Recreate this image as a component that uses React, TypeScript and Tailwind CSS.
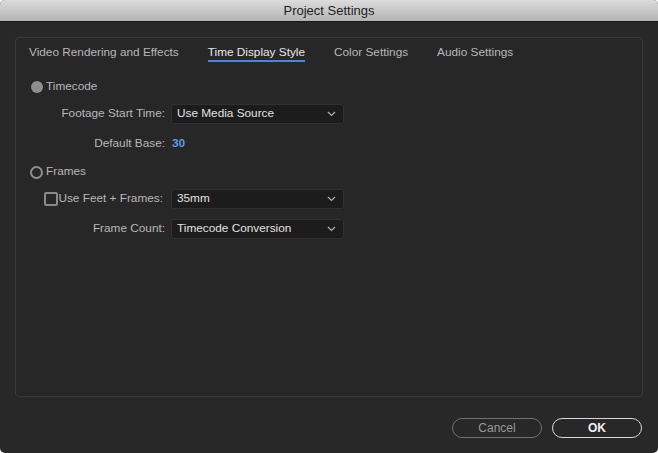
import React from 'react';

const tabs = ['Video Rendering and Effects', 'Time Display Style', 'Color Settings', 'Audio Settings'];

function Chevron() {
  return (
    <svg width="9" height="6" viewBox="0 0 9 6" className="text-[#b0b0b0]">
      <polyline points="1,1 4.5,4.5 8,1" fill="none" stroke="currentColor" strokeWidth="1.2" />
    </svg>
  );
}

function Select({ value }: { value: string }) {
  return (
    <div className="flex h-[20px] w-[173px] items-center justify-between rounded-[3px] border border-[#303030] bg-[#1c1c1c] pl-[5px] pr-[7px] text-[#e2e2e2]">
      <span>{value}</span>
      <Chevron />
    </div>
  );
}

function FieldRow({ label, children, className }: { label: React.ReactNode; children: React.ReactNode; className?: string }) {
  return (
    <div className={`flex h-[20px] items-center gap-[6px] ${className ?? ''}`}>
      <div className="flex w-[149px] items-center justify-end whitespace-nowrap">{label}</div>
      {children}
    </div>
  );
}

export default function App() {
  return (
    <div className="h-[453px] w-[658px] bg-white" style={{ fontFamily: '"Liberation Sans", Arial, sans-serif' }}>
      <div className="flex h-full w-full flex-col overflow-hidden rounded-[5px] bg-[#282828] text-[11.8px] text-[#b8b8b8]">
        {/* Title bar */}
        <div className="flex h-[22px] shrink-0 items-center justify-center border-b border-[#161616] bg-gradient-to-b from-[#dcdcdc] to-[#b4b4b4] text-[13px] text-[#1e1e1e]">
          Project Settings
        </div>

        <div className="px-[15px] pt-[15px]">
          <div className="h-[360px] rounded-[4px] border border-[#3a3a3a] bg-[#272727]">
            {/* Tabs */}
            <div className="flex gap-[29px] pl-[13px]">
              {tabs.map((t, i) => (
                <div
                  key={t}
                  className={`border-b-2 pt-[7px] pb-[1px] leading-[14px] ${
                    i === 1 ? 'border-[#4a85dd] text-[#e8e8e8]' : 'border-transparent text-[#b8b8b8]'
                  }`}
                >
                  {t}
                </div>
              ))}
            </div>

            {/* Timecode */}
            <div className="mt-[18px] flex h-[14px] items-center gap-[3px] pl-[15px]">
              <div className="h-[12px] w-[12px] rounded-full bg-[#8f8f8f]" />
              <span>Timecode</span>
            </div>

            <FieldRow className="mt-[10px]" label={<span>Footage Start Time:</span>}>
              <Select value="Use Media Source" />
            </FieldRow>

            <FieldRow className="mt-[10px]" label={<span>Default Base:</span>}>
              <span className="pl-[1px] font-bold text-[#5a9de6]">30</span>
            </FieldRow>

            {/* Frames */}
            <div className="mt-[11px] flex h-[14px] items-center gap-[3px] pl-[14px]">
              <div className="h-[13px] w-[13px] rounded-full border-2 border-[#8f8f8f]" />
              <span>Frames</span>
            </div>

            <FieldRow
              className="mt-[10px]"
              label={
                <div className="flex w-full items-center pl-[28px] pr-[2px]">
                  <div className="h-[14px] w-[14px] shrink-0 rounded-[2px] border-2 border-[#8a8a8a]" />
                  <span className="ml-auto">Use Feet + Frames:</span>
                </div>
              }
            >
              <Select value="35mm" />
            </FieldRow>

            <FieldRow className="mt-[10px]" label={<span>Frame Count:</span>}>
              <Select value="Timecode Conversion" />
            </FieldRow>
          </div>
        </div>

        {/* Buttons */}
        <div className="mt-[21px] flex justify-end gap-[10px] pr-[16px]">
          <button className="h-[20px] w-[90px] rounded-full border border-[#707070] text-[12px] text-[#9a9a9a]">
            Cancel
          </button>
          <button className="h-[20px] w-[90px] rounded-full border border-[#d8d8d8] text-[12px] font-bold text-[#f0f0f0]">
            OK
          </button>
        </div>
      </div>
    </div>
  );
}
